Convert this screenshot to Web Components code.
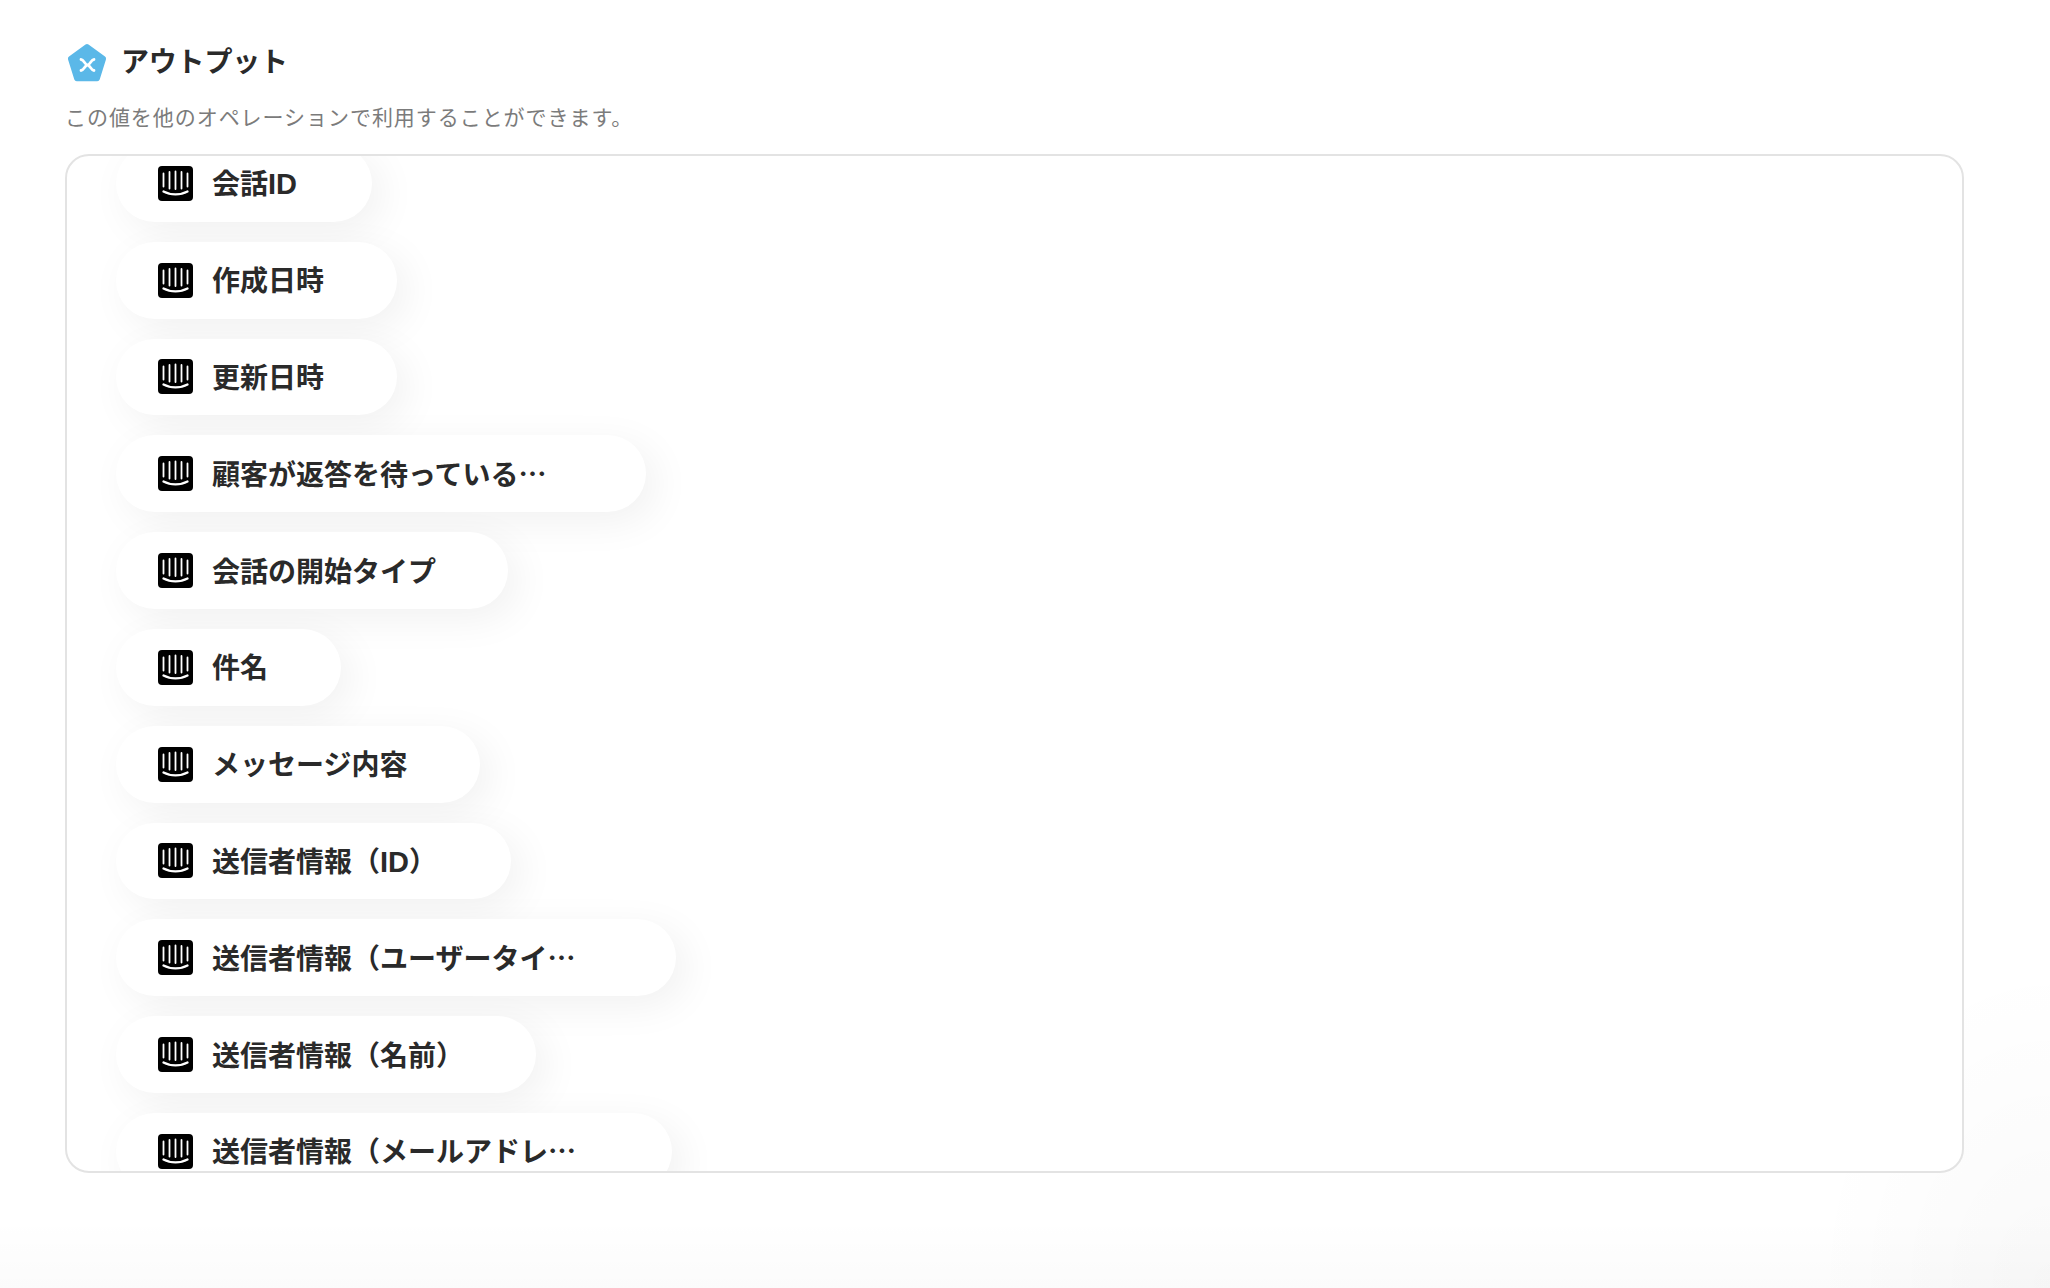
<!DOCTYPE html>
<html lang="ja"><head><meta charset="utf-8">
<style>
html,body{margin:0;padding:0;height:100%;background:#fff}
body{font-family:"Noto Sans CJK JP","Noto Sans",sans-serif;overflow:hidden}
output-page{height:1288px}
.lat{font-family:"Liberation Sans","Noto Sans CJK JP",sans-serif;font-size:29px}
</style></head><body>
<output-page>
  <section-heading title="アウトプット">この値を他のオペレーションで利用することができます。</section-heading>
  <output-panel>
    <value-pill width="256">会話<span class="lat">ID</span></value-pill>
    <value-pill width="281">作成日時</value-pill>
    <value-pill width="281">更新日時</value-pill>
    <value-pill width="530">顧客が返答を待っている…</value-pill>
    <value-pill width="392">会話の開始タイプ</value-pill>
    <value-pill width="225">件名</value-pill>
    <value-pill width="364">メッセージ内容</value-pill>
    <value-pill width="395">送信者情報（<span class="lat">ID</span>）</value-pill>
    <value-pill width="560">送信者情報（ユーザータイ…</value-pill>
    <value-pill width="420">送信者情報（名前）</value-pill>
    <value-pill width="556">送信者情報（メールアドレ…</value-pill>
  </output-panel>
</output-page>
<script>
class OutputPage extends HTMLElement{constructor(){super();this.attachShadow({mode:'open'}).innerHTML=`<style>
:host{display:block;box-sizing:border-box;padding:43px 86px 0 65px;position:relative;overflow:hidden;
background:radial-gradient(ellipse 240px 330px at 100% 100%,rgba(0,0,0,.022),rgba(0,0,0,0) 100%),linear-gradient(to top,rgba(0,0,0,.014),rgba(0,0,0,0) 70px)}
</style><slot></slot>`}}
class SectionHeading extends HTMLElement{constructor(){super();this.attachShadow({mode:'open'}).innerHTML=`<style>
:host{display:block;margin-bottom:23px}
.t{display:flex;align-items:center;gap:14px;height:40px;margin-bottom:18px}
svg{width:40px;height:40px;flex:none;margin-left:2px}
h2{margin:0 0 6px;font-size:28px;font-weight:700;color:#2a2a2a;line-height:40px;letter-spacing:-.2px}
p{margin:0;font-size:21px;line-height:30px;color:#7b7b7b;letter-spacing:.95px}
</style><div class="t"><svg viewBox="0 0 40 40"><path d="M18.500 1.600a2.600 2.600 0 0 1 3 0L38 13.600a2.600 2.600 0 0 1 .95 2.900L32.700 36.500a2.600 2.600 0 0 1-2.500 1.800H9.800a2.600 2.600 0 0 1-2.500-1.800L1.050 16.500a2.600 2.600 0 0 1 .95-2.900Z" fill="#5bb8e8"/><path d="M14 16.500c3 0 4 5.500 6.500 5.500s3.500-5.500 6.500-5.500M14 27.500c3 0 4-5.500 6.500-5.500s3.500 5.500 6.500 5.500" fill="none" stroke="#fff" stroke-width="2.800" stroke-linecap="round"/></svg><h2></h2></div><p><slot></slot></p>`;
this.shadowRoot.querySelector('h2').textContent=this.getAttribute('title');}}
class OutputPanel extends HTMLElement{constructor(){super();this.attachShadow({mode:'open'}).innerHTML=`<style>
:host{display:block;box-sizing:border-box;height:1019px;border:2px solid #e3e3e3;border-radius:24px;overflow:hidden;background:#fff}
.s{display:flex;flex-direction:column;align-items:flex-start;gap:20px;padding-left:49px;margin-top:-11px}
</style><div class="s"><slot></slot></div>`}}
class ValuePill extends HTMLElement{constructor(){super();this.attachShadow({mode:'open'}).innerHTML=`<style>
:host{display:flex;flex:none;align-items:center;box-sizing:border-box;height:76.8px;border-radius:39px;background:#fff;padding-left:42px;gap:19px;
box-shadow:10px 10px 40px rgba(0,0,0,.06);font-size:28px;font-weight:700;color:#2a2a2a;white-space:nowrap}
svg{width:35px;height:35px;flex:none}
span{margin-bottom:2px}
</style><svg viewBox="0 0 35 35"><rect width="35" height="35" rx="4"/><g stroke="#fff" stroke-width="1.800" stroke-linecap="round" fill="none"><path d="M5.500 7.500v13M11.500 6v16.500M17.500 5.500v17.500M23.500 6v16.500M29.500 7.500v13"/><path d="M5.500 25.500c7 3.800 17 3.800 24 0" stroke-width="2.300"/></g></svg><span><slot></slot></span>`;
this.style.width=this.getAttribute('width')+'px';}}
customElements.define('output-page',OutputPage);
customElements.define('section-heading',SectionHeading);
customElements.define('output-panel',OutputPanel);
customElements.define('value-pill',ValuePill);
</script>
</body></html>
